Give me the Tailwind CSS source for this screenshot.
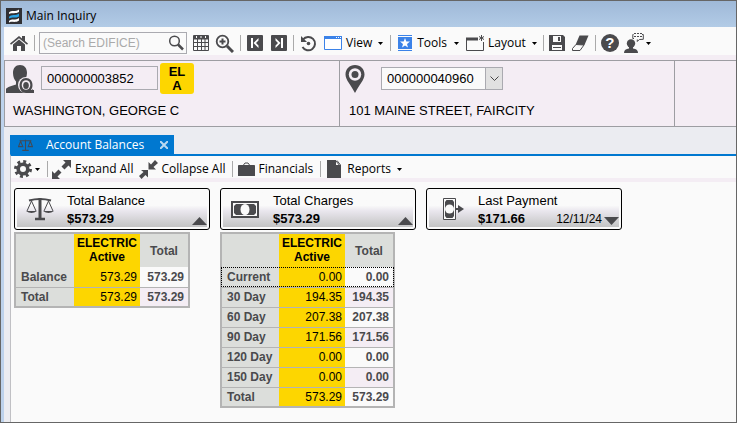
<!DOCTYPE html>
<html lang="en">
<head>
  <meta charset="UTF-8">
  <meta name="viewport" content="width=device-width, initial-scale=1">
  <title>Main Inquiry</title>
  <script src="https://cdn.jsdelivr.net/npm/@tailwindcss/browser@4"></script>
</head>
<body class="min-h-screen flex flex-col border border-[#666] bg-[#fafafa] font-['Liberation_Sans',sans-serif] text-[13px] text-black">

  <!-- Title bar -->
  <header class="h-[26px] shrink-0 flex items-center gap-1 pl-[5px] pt-1 bg-linear-to-b from-[#9fb9d8] to-[#b2cbe6] font-['Open_Sans',sans-serif] text-[12px]">
    <svg class="size-4" viewBox="0 0 16 16"><rect width="16" height="16" fill="#303034"/><path d="M3 4.500C5 2 10 4 13 1.500V4C10 6 6 4.500 3 6z" fill="#fff"/><path d="M3 9C5 6 10 8 13 5.500V8.500C10 10.500 6 8.500 3 10.500z" fill="#29a3e6"/><path d="M3 13C5 10.500 10 12.500 13 10V12.500C10 15 6 13 3 14.500z" fill="#fff"/></svg>
    <h1>Main Inquiry</h1>
  </header>

  <div class="grow flex flex-col border-l-3 border-[#bdd2ec]">

    <!-- Main toolbar -->
    <nav class="h-7 shrink-0 flex items-center pl-[5px] pt-1 font-['Open_Sans',sans-serif] text-[12px] text-black">
      <button aria-label="Home"><svg class="w-5 h-4" viewBox="0 0 20 16" fill="#4a4a4d"><path d="M10 1 1 8.500l1 1.200 8-6.500 8 6.500 1-1.200-3-2.500V1h-3v2.500z"/><path d="m4 9.500 6-5 6 5V16h-4v-5H8v5H4z"/></svg></button>
      <span class="w-px h-4 ml-[5px] mr-1 bg-[#aaa]"></span>
      <div class="flex items-center w-[148px] h-[22px] border border-[#aaaab0] bg-[#fafafa]">
        <input type="text" aria-label="Search" placeholder="(Search EDIFICE)" class="min-w-0 grow pl-[3px] font-['Liberation_Sans',sans-serif] text-[12px] placeholder:text-[#aaa] outline-none">
        <button aria-label="Run search"><svg class="size-4 mr-[2px]" viewBox="0 0 16 16" fill="none" stroke="#4a4a4d"><circle cx="6.500" cy="6" r="4.800" stroke-width="1.500"/><path d="m10 9.500 5 5" stroke-width="2.500"/></svg></button>
      </div>
      <button class="ml-[6px]" aria-label="Grid"><svg class="size-4" viewBox="0 0 16 16" fill="none" stroke="#4a4a4d"><path d="M.5.5h15v15H.5zM0 2h16M0 4h16M0 7.500h16M0 11.500h16M4.500 4v12M8.500 4v12M12 4v12"/><path d="M1 2.500h14" stroke-width="3"/><path d="M3.500 1v2m4.500-2v2m4.500-2v2" stroke="#fafafa"/></svg></button>
      <button class="ml-[6px]" aria-label="Zoom"><svg class="size-[19px]" viewBox="0 0 19 19" fill="none" stroke="#4a4a4d"><circle cx="7.500" cy="7.500" r="5.800" stroke-width="1.800"/><path d="M4.500 7.500h6m-3-3v6" stroke-width="2"/><path d="m12 12 6 6" stroke-width="3"/></svg></button>
      <span class="w-px h-4 mx-[6px] bg-[#aaa]"></span>
      <button aria-label="Previous"><svg class="size-4" viewBox="0 0 16 16"><rect width="16" height="16" rx="1" fill="#4a4a4d"/><path d="M4 3h2v10H4zM11.500 3v2.500L9 8l2.500 2.500V13L6.500 8z" fill="#fff"/></svg></button>
      <button class="ml-2" aria-label="Next"><svg class="size-4" viewBox="0 0 16 16"><rect width="16" height="16" rx="1" fill="#4a4a4d"/><path d="M10 3h2v10h-2zM4.500 3v2.500L7 8l-2.500 2.500V13l5-5z" fill="#fff"/></svg></button>
      <span class="w-px h-4 mx-[6px] bg-[#aaa]"></span>
      <button aria-label="Refresh"><svg class="size-[17px]" viewBox="0 0 17 17" fill="none" stroke="#4a4a4d"><path d="M3 4.500A6.700 6.700 0 1 1 2.500 12" stroke-width="2"/><path d="M1 1v6h6z" fill="#4a4a4d" stroke="none"/><circle cx="8.500" cy="8.500" r="1.800" fill="#4a4a4d" stroke="none"/></svg></button>
      <button class="ml-[7px] flex items-center gap-1">
        <svg class="w-[18px] h-[14px]" viewBox="0 0 18 14"><path d="M.5.5h17v13H.5z" fill="#fff" stroke="#3b82e8"/><path d="M0 0h18v3H0z" fill="#3b82e8"/><path d="M12 1.500h1m1 0h1m1 0h1" stroke="#fff"/></svg>
        View
        <svg class="w-[5px] h-[3px] ml-[2px]" viewBox="0 0 5 3"><path d="M0 0h5L2.500 3z"/></svg>
      </button>
      <span class="w-px h-4 mx-[7px] bg-[#aaa]"></span>
      <button class="flex items-center gap-[5px]">
        <svg class="w-[14px] h-4" viewBox="0 0 14 16"><path d="M0 0h14v1H0zM0 2h14v12H0zM0 15h14v1H0z" fill="#3b82e8"/><path d="m7 3 1.300 3.500H12L9 9l1 3.500-3-2-3 2L5 9 2 6.500h3.700z" fill="#fff"/></svg>
        Tools
        <svg class="w-[5px] h-[3px] ml-[2px]" viewBox="0 0 5 3"><path d="M0 0h5L2.500 3z"/></svg>
      </button>
      <button class="ml-[7px] flex items-center gap-1">
        <svg class="w-[18px] h-4" viewBox="0 0 18 16" fill="none" stroke="#4a4a4d"><path d="M.5 3v12.500h17V7"/><path d="M0 4h12" stroke-width="3"/><path d="M15.500 0v6M13 1.500l5 3m0-3-5 3"/></svg>
        Layout
        <svg class="w-[5px] h-[3px] ml-[2px]" viewBox="0 0 5 3"><path d="M0 0h5L2.500 3z"/></svg>
      </button>
      <span class="w-px h-4 ml-[6px] mr-[5px] bg-[#aaa]"></span>
      <button aria-label="Save"><svg class="size-4" viewBox="0 0 16 16"><path d="M0 0h14l2 2v14H0z" fill="#4a4a4d"/><path d="M4 1h8v6H4zM3 10h10v5H3z" fill="#fafafa"/><path d="M9 2h2v4H9zM4 12h8v1H4z" fill="#4a4a4d"/></svg></button>
      <button class="ml-[7px]" aria-label="Clear"><svg class="w-[17px] h-4" viewBox="0 0 17 16"><path d="M7.500.5h9L12.500 10h-9z" fill="#4a4a4d"/><path d="M4 9.500.500 13.500v2H8L12 10z" fill="#fafafa" stroke="#4a4a4d"/></svg></button>
      <span class="w-px h-4 ml-[6px] mr-[5px] bg-[#aaa]"></span>
      <button aria-label="Help" class="size-[18px] rounded-full bg-[#4a4a4d] text-white text-[15px] leading-[18px] font-bold font-['Liberation_Sans',sans-serif]">?</button>
      <button class="ml-[5px] flex items-center gap-[2px]" aria-label="Support">
        <svg class="w-5 h-[21px]" viewBox="0 0 20 21" fill="#4a4a4d"><circle cx="7" cy="10.500" r="4.200"/><path d="M0 20c0-3 2-4 5-4.500V13h4v2.500c3 .5 5 1.500 5 4.500z"/><path d="M9.500 1.500H8.800v4h1.200M18 1.500h1.300v4.800l-4 .2-2 2V6.500" fill="none" stroke="#4a4a4d"/><path d="M10 .5h8" stroke="#4a4a4d" stroke-dasharray="2 1"/><path d="M10 3h2v1h-2zM13 3h2v1h-2zM16 3h2v1h-2z"/></svg>
        <svg class="w-[5px] h-[3px]" viewBox="0 0 5 3"><path d="M0 0h5L2.500 3z"/></svg>
      </button>
    </nav>

    <!-- Account and location -->
    <section class="shrink-0 pt-[5px] bg-[#f4edf4]">
      <div class="grid grid-cols-[335fr_335fr_62fr] h-[67px] border-y border-[#9d9da2]">
        <div class="flex flex-col border-l border-[#9d9da2]">
          <div class="flex items-start h-[33px] pt-[2px] pl-px">
            <svg class="w-7 h-7 mt-[2px]" viewBox="0 0 28 28" fill="#4a4a4d"><path d="M14 0c4.500 0 7 3 7 8 0 4-2 7-3.500 8.500V20l9.500 4v4H0v-4c1-2 6-3 10-4.500v-3C8.500 15 7 12 7 8c0-5 2.500-8 7-8z"/><circle cx="20" cy="20" r="8" fill="#f4edf4"/><path d="M20 13c4 0 6.500 3 6.500 7 0 2-.5 3.500-1.500 5h3v3h-8c-4 0-6.500-3.500-6.500-7.500S16 13 20 13z"/><ellipse cx="20" cy="20" rx="4.300" ry="4.800" fill="#f4edf4"/><ellipse cx="20" cy="20.500" rx="2.800" ry="3.500"/></svg>
            <input type="text" aria-label="Account number" value="000000003852" class="w-[117px] h-6 mt-[3px] ml-[7px] px-[5px] border border-[#aaaab0] text-[13px] outline-none">
            <div class="w-[34px] h-[31px] ml-[2px] flex items-center justify-center rounded-[3px] bg-[#fdd600] text-center font-bold leading-[14px]">EL<br>A</div>
          </div>
          <p class="mt-[7px] pl-2 leading-5">WASHINGTON, GEORGE C</p>
        </div>
        <div class="flex flex-col border-l border-[#9d9da2]">
          <div class="flex items-start pt-[2px] pl-[5px] h-[33px]">
            <svg class="w-5 h-7 mt-[2px]" viewBox="0 0 20 28"><path d="M10 0c5.500 0 9.500 4 9.500 9.500C19.500 15 14 20 10 28 6 20 .5 15 .5 9.500.5 4 4.500 0 10 0z" fill="#4a4a4d"/><circle cx="10" cy="9.500" r="6.200" fill="#f4edf4"/><circle cx="10" cy="9.500" r="3.500" fill="#4a4a4d"/></svg>
            <div class="relative mt-1 ml-4">
              <select aria-label="Location number" class="appearance-none w-[122px] h-[23px] pl-[5px] border border-[#aaaab0] bg-[#fafafa] text-[13px] outline-none">
                <option>000000040960</option>
              </select>
              <span class="pointer-events-none absolute right-0 top-0 h-[23px] w-[18px] flex items-center justify-center border border-[#aaaab0] bg-[#e1e1e1]">
                <svg class="w-[9px] h-[6px]" viewBox="0 0 9 6" fill="none" stroke="#444"><path d="m.5.5 4 4 4-4"/></svg>
              </span>
            </div>
          </div>
          <p class="mt-[7px] pl-[9px] leading-5">101 MAINE STREET, FAIRCITY</p>
        </div>
        <div class="border-l border-[#9d9da2]"></div>
      </div>
    </section>

    <!-- Tabs -->
    <div class="shrink-0 h-[27px] flex items-end pl-[6px] bg-[#ebecf1]">
      <div class="flex items-center w-[164px] h-[19px] pl-2 pr-[6px] bg-[#0078d0] text-white font-['Open_Sans',sans-serif] text-[12px]">
        <svg class="w-[15px] h-[14px]" viewBox="0 0 28 24" fill="none" stroke="#3f4a58" stroke-width="2"><path d="M3 4h22M14 2v20M8 22h12M5 5 1 15h8zM23 5l-4 10h8z"/></svg>
        <a href="#" class="ml-[13px] grow whitespace-nowrap">Account Balances</a>
        <button aria-label="Close tab"><svg class="size-2" viewBox="0 0 8 8" stroke="#b9d9f0" stroke-width="2"><path d="m0 0 8 8M8 0 0 8"/></svg></button>
      </div>
    </div>

    <main class="grow flex border-l-6 border-[#ebecf1]">
      <div class="grow border-t-2 border-l border-t-[#0078d0] border-l-[#c0c0c4]">

        <!-- Tab toolbar -->
        <div class="h-[26px] flex items-center pl-[3px] border-b-4 border-[#f4edf4] font-['Open_Sans',sans-serif] text-[12px] pt-1">
          <button class="flex items-center gap-[3px]" aria-label="Settings">
            <svg class="size-[18px]" viewBox="0 0 18 18" fill="none" stroke="#4a4a4d"><circle cx="9" cy="9" r="4.800" stroke-width="3.600"/><circle cx="9" cy="9" r="7.500" stroke-width="3" stroke-dasharray="2.900 2.990"/></svg>
            <svg class="w-[5px] h-[3px]" viewBox="0 0 5 3"><path d="M0 0h5L2.500 3z"/></svg>
          </button>
          <span class="w-px h-4 ml-[7px] mr-1 bg-[#aaa]"></span>
          <button class="flex items-center gap-1">
            <svg class="size-[19px]" viewBox="0 0 19 19" fill="#4a4a4d"><path d="M11 0h8v8l-2.500-2.500-4 4-3-3 4-4zM0 11l2.500 2.500 4-4 3 3-4 4L8 19H0z"/><path d="m6 6 7 7" stroke="#fafafa" stroke-width="3"/></svg>
            Expand All
          </button>
          <button class="ml-[6px] flex items-center gap-[3px]">
            <svg class="size-[19px]" viewBox="0 0 19 19" fill="#4a4a4d"><path d="M9.500 9.500V2L12 4.500 16 0l3 3-4.500 4L17 9.500zM9 10v7.500L6.500 15l-4 4L0 16l4.500-4L2 10z"/></svg>
            Collapse All
          </button>
          <span class="w-px h-4 ml-[6px] mr-[5px] bg-[#aaa]"></span>
          <button class="flex items-center gap-1">
            <svg class="w-[17px] h-[14px]" viewBox="0 0 17 14" fill="#4a4a4d"><path d="M0 4c0-1 .5-1 1-1h15c.5 0 1 0 1 1v10H0z"/><path d="M5.500 3 7 1h3l1.500 2" fill="none" stroke="#4a4a4d"/></svg>
            Financials
          </button>
          <span class="w-px h-4 ml-[7px] mr-[6px] bg-[#aaa]"></span>
          <button class="flex items-center gap-[6px]">
            <svg class="w-[14px] h-[18px]" viewBox="0 0 14 18"><path d="M0 0h9v5h5v13H0z" fill="#4a4a4d"/><path d="m9 1 4 5M10 .5 13.500 5" stroke="#4a4a4d"/></svg>
            Reports
            <svg class="w-[5px] h-[3px]" viewBox="0 0 5 3"><path d="M0 0h5L2.500 3z"/></svg>
          </button>
        </div>

        <!-- Balance cards -->
        <div class="flex items-start gap-[10px] pl-[3px] pt-[6px]">
          <section class="w-[196px]">
            <button class="relative w-full h-[42px] flex items-center p-[2px] border border-black rounded-[3px] bg-[#fafafa] text-left">
              <span class="w-full h-full flex items-center pl-[9px] bg-linear-to-b from-[#fafafa] from-40% via-[#eae7ee] via-55% to-[#c3c4c4]">
                <svg class="w-7 h-6" viewBox="0 0 28 24" fill="none" stroke="#4a4a4d"><path d="M3 3.500q11-3 22 0" stroke-width="2"/><path d="M14 1v20" stroke-width="3"/><path d="M9 22h10" stroke-width="2.500"/><path d="M5.500 4 1 14m4.500-10L10 14M22.500 4 18 14m4.500-10L27 14"/><path d="M0 14h11q-5.500 4-11 0zM17 14h11q-5.500 4-11 0z" fill="#4a4a4d" stroke="none"/></svg>
                <span class="ml-[13px] pt-px flex flex-col leading-[18px]"><span>Total Balance</span><b>$573.29</b></span>
              </span>
              <svg class="absolute right-[2px] bottom-1 w-[15px] h-[8px]" viewBox="0 0 15 8"><path d="M0 8h15L7.500 0z" fill="#4a4a4d"/></svg>
            </button>
            <table class="mt-[2px] border-collapse border-2 border-[#b4b4b4] text-[12px] text-right font-bold text-[#4a4a4d] leading-[14px]">
              <thead>
                <tr class="h-[34px] bg-[#dcdedb] text-center">
                  <td class="w-[59px]"></td>
                  <th class="w-[66px] pb-[2px] bg-[#fdd600] text-black">ELECTRIC<br>Active</th>
                  <th class="w-[49px]">Total</th>
                </tr>
              </thead>
              <tbody>
                <tr class="h-5"><th class="pl-[5px] bg-[#dcdedb] text-left">Balance</th><td class="pr-[3px] bg-[#fdd600] text-black font-normal">573.29</td><td class="pr-1">573.29</td></tr>
                <tr class="h-5 border-t border-[#b4b4b4]"><th class="pl-[5px] bg-[#dcdedb] text-left">Total</th><td class="pr-[3px] bg-[#fdd600] text-black font-normal">573.29</td><td class="pr-1 bg-[#f4edf4]">573.29</td></tr>
              </tbody>
            </table>
          </section>

          <section class="w-[196px]">
            <button class="relative w-full h-[42px] flex items-center p-[2px] border border-black rounded-[3px] bg-[#fafafa] text-left">
              <span class="w-full h-full flex items-center pl-2 bg-linear-to-b from-[#fafafa] from-40% via-[#eae7ee] via-55% to-[#c3c4c4]">
                <svg class="w-7 h-[17px]" viewBox="0 0 28 17"><path d="M1 1h26v15H1z" fill="#fafafa" stroke="#4a4a4d" stroke-width="2"/><path d="M5 3h18l2 2v7l-2 2H5l-2-2V5z" fill="#4a4a4d"/><ellipse cx="14" cy="8.500" rx="4.500" ry="5.500" fill="#fafafa"/></svg>
                <span class="ml-[14px] pt-px flex flex-col leading-[18px]"><span>Total Charges</span><b>$573.29</b></span>
              </span>
              <svg class="absolute right-[2px] bottom-1 w-[15px] h-[8px]" viewBox="0 0 15 8"><path d="M0 8h15L7.500 0z" fill="#4a4a4d"/></svg>
            </button>
            <table class="mt-[2px] border-collapse border-2 border-[#b4b4b4] text-[12px] text-right font-bold text-[#4a4a4d] leading-[14px]">
              <thead>
                <tr class="h-[34px] bg-[#dcdedb] text-center">
                  <td class="w-[58px]"></td>
                  <th class="w-[66px] pb-[2px] bg-[#fdd600] text-black">ELECTRIC<br>Active</th>
                  <th class="w-[49px]">Total</th>
                </tr>
              </thead>
              <tbody>
                <tr class="h-5 outline outline-dotted outline-black -outline-offset-1"><th class="pl-[5px] bg-[#dcdedb] text-left">Current</th><td class="pr-[3px] bg-[#fdd600] text-black font-normal">0.00</td><td class="pr-1">0.00</td></tr>
                <tr class="h-5 border-t border-[#b4b4b4]"><th class="pl-[5px] bg-[#dcdedb] text-left">30 Day</th><td class="pr-[3px] bg-[#fdd600] text-black font-normal">194.35</td><td class="pr-1 bg-[#f4edf4]">194.35</td></tr>
                <tr class="h-5 border-t border-[#b4b4b4]"><th class="pl-[5px] bg-[#dcdedb] text-left">60 Day</th><td class="pr-[3px] bg-[#fdd600] text-black font-normal">207.38</td><td class="pr-1">207.38</td></tr>
                <tr class="h-5 border-t border-[#b4b4b4]"><th class="pl-[5px] bg-[#dcdedb] text-left">90 Day</th><td class="pr-[3px] bg-[#fdd600] text-black font-normal">171.56</td><td class="pr-1 bg-[#f4edf4]">171.56</td></tr>
                <tr class="h-5 border-t border-[#b4b4b4]"><th class="pl-[5px] bg-[#dcdedb] text-left">120 Day</th><td class="pr-[3px] bg-[#fdd600] text-black font-normal">0.00</td><td class="pr-1">0.00</td></tr>
                <tr class="h-5 border-t border-[#b4b4b4]"><th class="pl-[5px] bg-[#dcdedb] text-left">150 Day</th><td class="pr-[3px] bg-[#fdd600] text-black font-normal">0.00</td><td class="pr-1 bg-[#f4edf4]">0.00</td></tr>
                <tr class="h-5 border-t border-[#b4b4b4]"><th class="pl-[5px] bg-[#dcdedb] text-left">Total</th><td class="pr-[3px] bg-[#fdd600] text-black font-normal">573.29</td><td class="pr-1">573.29</td></tr>
              </tbody>
            </table>
          </section>

          <section class="w-[196px]">
            <button class="relative w-full h-[42px] flex items-center p-[2px] border border-black rounded-[3px] bg-[#fafafa] text-left">
              <span class="w-full h-full flex items-center pl-[14px] pr-[17px] bg-linear-to-b from-[#fafafa] from-40% via-[#eae7ee] via-55% to-[#c3c4c4]">
                <svg class="w-[21px] h-[22px]" viewBox="0 0 21 22"><path d="M.5.5h12v21H.5z" fill="#fafafa" stroke="#4a4a4d"/><path d="M3.500 2h6l1.500 2v14l-1.500 2h-6L2 18V4z" fill="#4a4a4d"/><circle cx="6.500" cy="11" r="4.500" fill="#fafafa"/><path d="M12 10h3V7l6 4-6 4v-3h-3z" fill="#4a4a4d"/></svg>
                <span class="ml-[14px] pt-px grow flex flex-col leading-[18px]"><span>Last Payment</span><span class="flex justify-between"><b>$171.66</b><span class="text-[12px]">12/11/24</span></span></span>
              </span>
              <svg class="absolute right-[2px] bottom-1 w-[15px] h-[8px]" viewBox="0 0 15 8"><path d="M0 0h15L7.500 8z" fill="#4a4a4d"/></svg>
            </button>
          </section>
        </div>
      </div>
    </main>
  </div>
</body>
</html>
